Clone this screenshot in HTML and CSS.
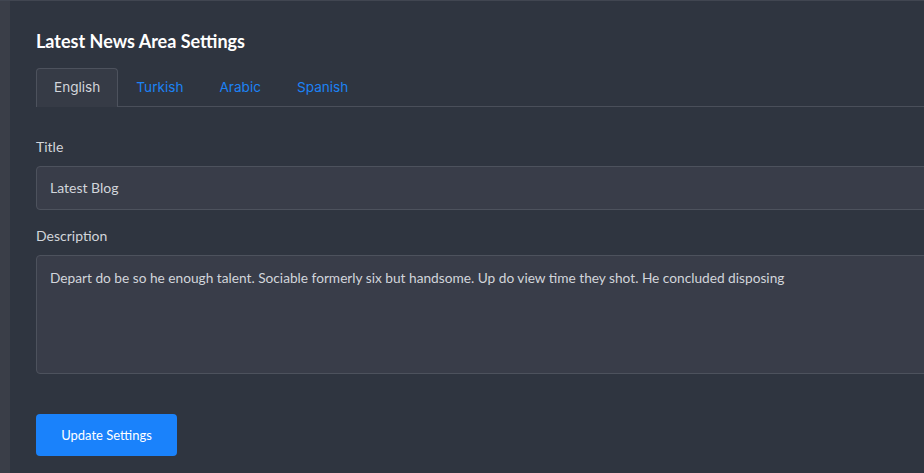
FILE: index.html
```html
<!DOCTYPE html>
<html>
<head>
<meta charset="utf-8">
<link rel="stylesheet" href="styles.css">
</head>
<body>
<div class="page">
  <div class="rail"></div>
  <div class="card">
    <h2 class="card-title">Latest News Area Settings</h2>
    <ul class="tabs">
      <li class="tab active">English</li>
      <li class="tab">Turkish</li>
      <li class="tab">Arabic</li>
      <li class="tab">Spanish</li>
    </ul>
    <div class="field">
      <label class="label">Title</label>
      <div class="input">Latest Blog</div>
    </div>
    <div class="field">
      <label class="label">Description</label>
      <div class="input textarea">Depart do be so he enough talent. Sociable formerly six but handsome. Up do view time they shot. He concluded disposing</div>
    </div>
    <button class="btn">Update Settings</button>
  </div>
</div>
</body>
</html>
```
FILE: styles.css
```css
html, body {
  margin: 0;
  padding: 0;
  height: 100%;
  overflow: hidden;
  background: #2f3540;
}
body {
  font-family: "Lato", "Liberation Sans", sans-serif;
  color: #d2d5db;
}
.page {
  display: flex;
  height: 100%;
  border-top: 1px solid #414651;
  box-sizing: border-box;
}
.rail {
  width: 10px;
  flex: none;
  background: #3a3e48;
}
.card {
  flex: none;
  width: 1100px;
  padding: 29px 0 0 26px;
  box-sizing: border-box;
}
.card-title {
  margin: 0 0 16px;
  font-size: 18px;
  font-weight: 700;
  line-height: 22px;
  color: #ffffff;
}
.tabs {
  display: flex;
  list-style: none;
  margin: 0;
  padding: 0;
  border-bottom: 1px solid #4a4f5a;
}
.tab {
  font-family: "Inter", "Open Sans", sans-serif;
  font-size: 13.6px;
  height: 37px;
  line-height: 37px;
  padding: 0 17px;
  color: #1c82f5;
  border: 1px solid transparent;
  border-bottom: none;
  border-radius: 4px 4px 0 0;
  margin-bottom: -1px;
}
.tab.active {
  color: #d2d5db;
  background: #363b46;
  border-color: #4d525d;
  height: 38px;
}
.field {
  margin-top: 30px;
}
.field + .field {
  margin-top: 16px;
}
.label {
  display: block;
  font-size: 14px;
  line-height: 20px;
  margin-bottom: 9px;
  color: #d2d5db;
}
.input {
  height: 42px;
  line-height: 42px;
  padding: 0 13px;
  background: #393d49;
  border: 1px solid #4d525d;
  border-radius: 4px;
  font-size: 14px;
  color: #d2d5db;
}
.textarea {
  font-size: 13.7px;
  line-height: 22px;
  padding-top: 11px;
  box-sizing: border-box;
  height: 119px;
}
.btn {
  display: block;
  margin-top: 40px;
  width: 141px;
  height: 42px;
  background: #1a82fb;
  color: #ffffff;
  border: none;
  border-radius: 4px;
  font-family: "Lato", sans-serif;
  font-size: 13px;
}
```
